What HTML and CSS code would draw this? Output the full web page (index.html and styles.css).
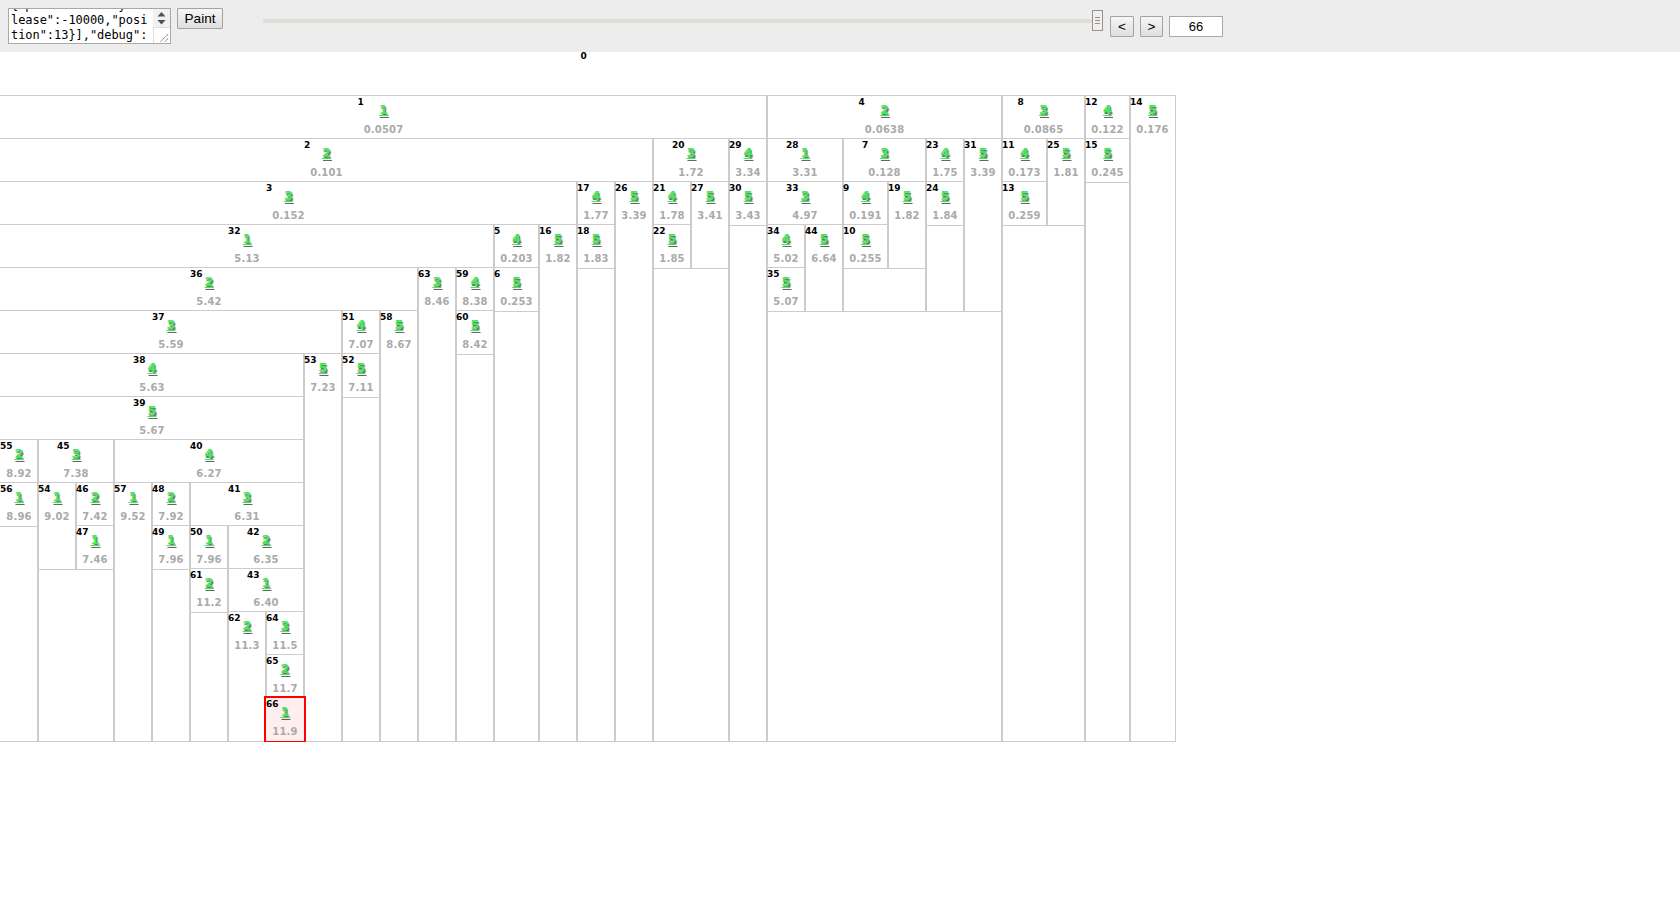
FILE: index.html
```html
<!DOCTYPE html>
<html lang="en">
<head>
<meta charset="utf-8">
<title>Search tree</title>
<link rel="stylesheet" href="styles.css">
</head>
<body>
<header class="toolbar">
  <div class="source">
    <div class="source-text"><div>{"pulse": "delay</div><div>lease":-10000,"posi</div><div>tion":13}],"debug":</div></div>
    <div class="source-side">
      <svg class="spin" width="17" height="18" viewBox="0 0 17 18"><path d="M8.500 3 12.500 7.500H4.500zM8.500 15.500 4.500 11H12.500z" fill="#505050"/></svg>
      <svg class="grip" width="17" height="16" viewBox="0 0 17 16"><path d="M7 14.500 15 6.500M11.500 14.500 15 11" stroke="#555" stroke-dasharray="1.400 .6" fill="none"/></svg>
    </div>
  </div>
  <button class="btn paint">Paint</button>
  <div class="slider"><div class="track"></div><div class="thumb"><i></i><i></i><i></i></div></div>
  <button class="btn step">&lt;</button>
  <button class="btn step next">&gt;</button>
  <div class="field">66</div>
</header>
<main class="tree" id="tree"></main>
<script src="tree.js"></script>
</body>
</html>
```
FILE: styles.css
```css
body { margin: 0; background: #fff; overflow: hidden; }
.toolbar {
  box-sizing: border-box; height: 52px; padding: 8px 0 0 8px;
  display: flex; align-items: flex-start; background: #ededed;
  font: 13.6px/16px "Liberation Sans", Arial, sans-serif; color: #000;
}
.source {
  box-sizing: border-box; width: 163px; height: 36px; border: 1px solid #a9a9a9;
  background: #fff; display: flex; overflow: hidden;
}
.source-text {
  width: 144px; height: 34px; padding-left: 2px; box-sizing: border-box; overflow: hidden;
  display: flex; flex-direction: column; justify-content: flex-end;
  font: 12px/15px "DejaVu Sans Mono", monospace; letter-spacing: -0.05px; white-space: pre;
}
.source-text div { flex: none; }
.source-side { width: 17px; display: flex; flex-direction: column; }
.spin { background: #f1f1f1; }
.grip { border-left: 1px solid #ddd; border-top: 1px solid #ddd; box-sizing: border-box; }
.btn {
  box-sizing: border-box; height: 21px; padding: 0; border: 1px solid #a3a3a3; border-radius: 1px;
  background: linear-gradient(#f6f6f6, #dedede); font: inherit; color: #000;
}
.paint { width: 46px; margin-left: 6px; }
.slider { width: 840px; height: 21px; margin: 2px 0 0 40px; display: flex; align-items: center; }
.track { flex: 1; height: 4px; background: #e3ddd8; }
.thumb {
  box-sizing: border-box; width: 11px; height: 21px; border: 1px solid #9c9186; background: #f1efed;
  display: flex; flex-direction: column; align-items: center; justify-content: center; gap: 2px;
}
.thumb i { width: 5px; height: 1px; background: #9c9186; }
.step { width: 24px; margin: 8px 0 0 7px; }
.next { width: 23px; margin-left: 6px; }
.field {
  box-sizing: border-box; width: 54px; height: 21px; margin: 8px 0 0 6px; border: 1px solid #a9a9a9;
  background: #fff; text-align: center; line-height: 19px; font-size: 13px;
}
.tree { width: max-content; font: bold 10px/12px Verdana, "DejaVu Sans", sans-serif; }
/* Neighbouring boxes overlap by their borders, so shared edges draw two pixels wide. */
.node { border: 1px solid #ccc; margin: 0 -1px; }
.root { border-color: transparent; border-top: 0; }
.head { width: 38px; height: 43px; margin: 0 auto; text-align: center; }
.w3 { width: 45px; }
.w4 { width: 52px; }
.root > .head { width: 14px; height: 44px; }
.order { height: 10px; text-align: left; color: #000; font-size: 9px; line-height: 12px; }
.root > .head .order { line-height: 9px; }
.digit {
  font-size: 13px; line-height: 16px; height: 18px; margin-top: -4px; padding: 0 0 4px;
  color: #42e858; text-decoration: underline; text-decoration-thickness: 1px; text-underline-offset: 1px;
  text-shadow: 1px 2px 1px rgba(0, 0, 0, .6);
}
.value { color: #aaa; letter-spacing: 0.15px; }
.kids { display: flex; margin: -1px 0; }
.current { background: #fee; outline: 2px solid #f00; outline-offset: -1px; position: relative; z-index: 1; }
```
FILE: tree.js
```javascript
// Each node: [order, digit, value, ...children]
const data =
[0, "", "",
  [1, 1, "0.0507",
    [2, 2, "0.101",
      [3, 3, "0.152",
        [32, 1, "5.13",
          [36, 2, "5.42",
            [37, 3, "5.59",
              [38, 4, "5.63",
                [39, 5, "5.67",
                  [55, 2, "8.92", [56, 1, "8.96"]],
                  [45, 3, "7.38", [54, 1, "9.02"], [46, 2, "7.42", [47, 1, "7.46"]]],
                  [40, 4, "6.27",
                    [57, 1, "9.52"],
                    [48, 2, "7.92", [49, 1, "7.96"]],
                    [41, 3, "6.31",
                      [50, 1, "7.96", [61, 2, "11.2"]],
                      [42, 2, "6.35",
                        [43, 1, "6.40",
                          [62, 2, "11.3"],
                          [64, 3, "11.5", [65, 2, "11.7", [66, 1, "11.9"]]]]]]]]],
              [53, 5, "7.23"]],
            [51, 4, "7.07", [52, 5, "7.11"]],
            [58, 5, "8.67"]],
          [63, 3, "8.46"],
          [59, 4, "8.38", [60, 5, "8.42"]]],
        [5, 4, "0.203", [6, 5, "0.253"]],
        [16, 5, "1.82"]],
      [17, 4, "1.77", [18, 5, "1.83"]],
      [26, 5, "3.39"]],
    [20, 3, "1.72", [21, 4, "1.78", [22, 5, "1.85"]], [27, 5, "3.41"]],
    [29, 4, "3.34", [30, 5, "3.43"]]],
  [4, 2, "0.0638",
    [28, 1, "3.31", [33, 3, "4.97", [34, 4, "5.02", [35, 5, "5.07"]], [44, 5, "6.64"]]],
    [7, 3, "0.128", [9, 4, "0.191", [10, 5, "0.255"]], [19, 5, "1.82"]],
    [23, 4, "1.75", [24, 5, "1.84"]],
    [31, 5, "3.39"]],
  [8, 3, "0.0865", [11, 4, "0.173", [13, 5, "0.259"]], [25, 5, "1.81"]],
  [12, 4, "0.122", [15, 5, "0.245"]],
  [14, 5, "0.176"]];

function el(cls, text) {
  const e = document.createElement("div");
  e.className = cls;
  if (text !== undefined) e.textContent = text;
  return e;
}

function paint([order, digit, value, ...kids]) {
  const node = el("node" + (order === 0 ? " root" : "") + (order === 66 ? " current" : ""));
  const head = el("head w" + (value.length - 2));
  head.append(el("order", order), el("digit", digit), el("value", value));
  node.append(head);
  if (kids.length) {
    const row = el("kids");
    row.append(...kids.map(paint));
    node.append(row);
  }
  return node;
}

document.getElementById("tree").append(paint(data));
```
